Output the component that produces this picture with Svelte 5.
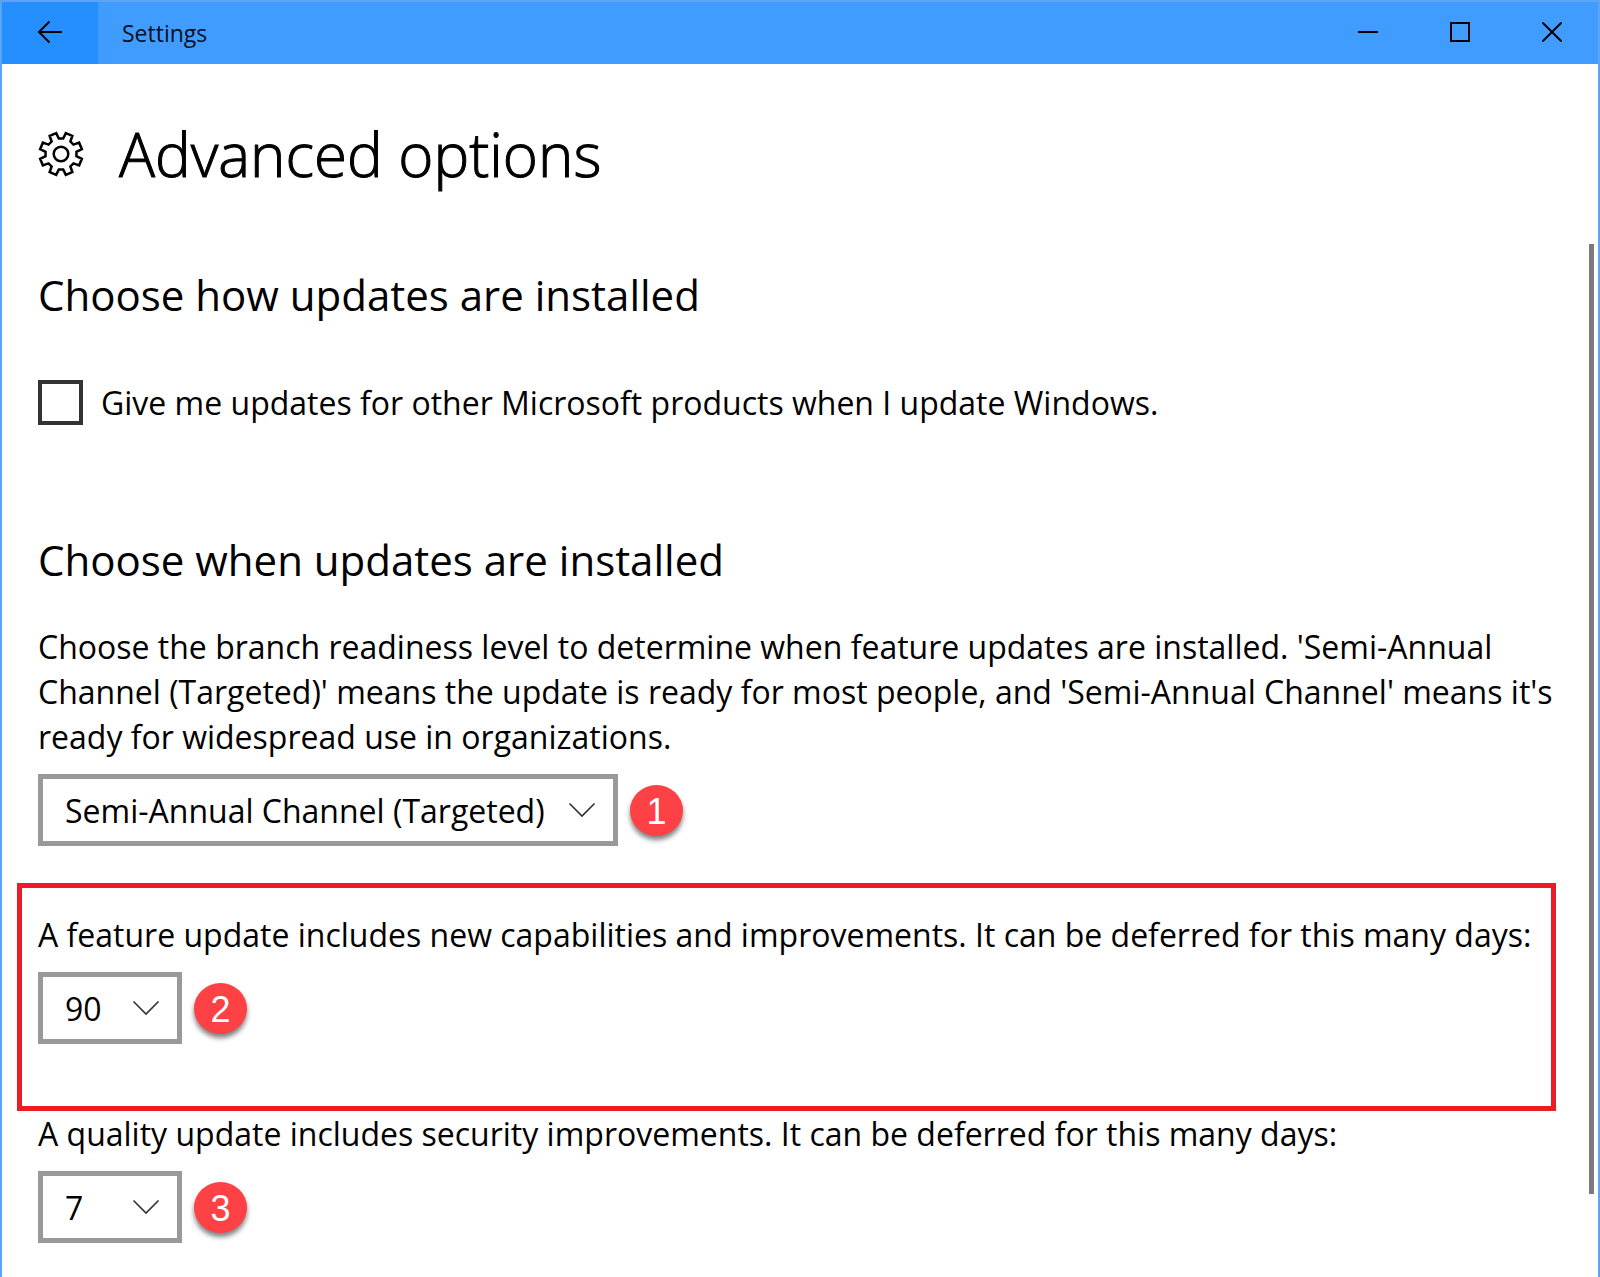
<script lang="ts">
  let otherProducts = $state(false)
  let channel = $state("Semi-Annual Channel (Targeted)")
  let featureDays = $state("90")
  let qualityDays = $state("7")

  const dayOptions = ["0", "7", "14", "30", "60", "90"]

  function gearPath(teeth: number, outer: number, inner: number) {
    const step = 360 / teeth
    const point = (r: number, deg: number) => {
      const a = (deg * Math.PI) / 180
      return `${(24 + r * Math.sin(a)).toFixed(2)} ${(24 - r * Math.cos(a)).toFixed(2)}`
    }
    const points: string[] = []
    for (let i = 0; i < teeth; i++) {
      const base = i * step
      points.push(point(inner, base - 8), point(inner, base + 8), point(outer, base + 13), point(outer, base + step - 13))
    }
    return `M${points.join("L")}Z`
  }
</script>

{#snippet chevron()}
  <svg class="chevron" width="28" height="16" viewBox="0 0 28 16" aria-hidden="true">
    <path d="M1.500 1.500 14 14 26.500 1.500" />
  </svg>
{/snippet}

<div class="window">
  <header class="titlebar">
    <button class="back" type="button" aria-label="Back">
      <svg width="26" height="24" viewBox="0 0 26 24" aria-hidden="true"><path d="M25 12H2M12.5 1.500 2 12l10.500 10.500" /></svg>
    </button>
    <span class="title">Settings</span>
    <button class="control" type="button" aria-label="Minimize">
      <svg width="20" height="20" viewBox="0 0 20 20" aria-hidden="true"><path d="M0 10h20" /></svg>
    </button>
    <button class="control" type="button" aria-label="Maximize">
      <svg width="20" height="20" viewBox="0 0 20 20" aria-hidden="true"><path d="M1 1h18v18H1z" /></svg>
    </button>
    <button class="control" type="button" aria-label="Close">
      <svg width="20" height="20" viewBox="0 0 20 20" aria-hidden="true"><path d="m.5.5 19 19m0-19-19 19" /></svg>
    </button>
  </header>

  <div class="page-head">
    <svg class="gear" width="48" height="48" viewBox="0 0 48 48" aria-hidden="true">
      <path d={gearPath(8, 21.4, 15.6)} />
      <circle cx="24" cy="24" r="7.300" />
    </svg>
    <h1>Advanced options</h1>
  </div>

  <div class="scroll-area">
    <main>
      <section class="how">
        <h2>Choose how updates are installed</h2>
        <label class="check">
          <input type="checkbox" bind:checked={otherProducts} />
          <span>Give me updates for other Microsoft products when I update Windows.</span>
        </label>
      </section>

      <section class="when">
        <h2>Choose when updates are installed</h2>
        <label class="description" for="channel">
          Choose the branch readiness level to determine when feature updates are installed. 'Semi-Annual Channel (Targeted)' means the update is ready for most people, and 'Semi-Annual Channel' means it's ready for widespread use in organizations.
        </label>
        <div class="field">
          <div class="dropdown wide">
            <select id="channel" bind:value={channel}>
              <option>Semi-Annual Channel (Targeted)</option>
              <option>Semi-Annual Channel</option>
            </select>
            {@render chevron()}
          </div>
          <span class="badge">1</span>
        </div>
      </section>

      <section class="highlight">
        <label class="description" for="feature-days">A feature update includes new capabilities and improvements. It can be deferred for this many days:</label>
        <div class="field">
          <div class="dropdown">
            <select id="feature-days" bind:value={featureDays}>
              {#each dayOptions as days}
                <option>{days}</option>
              {/each}
            </select>
            {@render chevron()}
          </div>
          <span class="badge">2</span>
        </div>
      </section>

      <section class="quality">
        <label class="description" for="quality-days">A quality update includes security improvements. It can be deferred for this many days:</label>
        <div class="field">
          <div class="dropdown">
            <select id="quality-days" bind:value={qualityDays}>
              {#each dayOptions as days}
                <option>{days}</option>
              {/each}
            </select>
            {@render chevron()}
          </div>
          <span class="badge">3</span>
        </div>
      </section>
    </main>
    <div class="scrollbar"></div>
  </div>
</div>

<style>
  .window {
    box-sizing: border-box;
    display: flex;
    flex-direction: column;
    min-height: 100vh;
    border: 2px solid #5aa5f5;
    border-bottom: none;
    background: #fff;
    color: #000;
    font-family: "Segoe UI", "Open Sans", "Noto Sans", sans-serif;
    font-size: 32px;
    line-height: 45px;
  }

  .titlebar {
    display: flex;
    align-items: stretch;
    height: 62px;
    background: #409dff;
  }

  .titlebar button {
    display: flex;
    align-items: center;
    justify-content: center;
    padding: 0 0 2px;
    border: none;
    background: none;
  }

  .titlebar .back {
    width: 96px;
    background: #268fff;
  }

  .titlebar .control {
    width: 92px;
  }

  .title {
    flex: 1;
    padding-left: 24px;
    font-size: 23px;
    line-height: 62px;
    color: #03101f;
  }

  svg {
    display: block;
    fill: none;
    stroke: #000;
    stroke-width: 2;
  }

  .page-head {
    display: flex;
    align-items: center;
    gap: 34px;
    height: 180px;
    padding-left: 35px;
  }

  .gear {
    stroke-width: 2.5;
  }

  h1,
  h2 {
    margin: 0;
    font-weight: 400;
  }

  h1 {
    font-size: 60px;
    font-weight: 300;
    line-height: 80px;
    -webkit-text-stroke: 1px #000;
  }

  h2 {
    font-size: 42px;
    line-height: 60px;
  }

  .scroll-area {
    display: flex;
    flex: 1;
    align-items: stretch;
  }

  main {
    flex: 1;
    min-width: 0;
  }

  .scrollbar {
    width: 5px;
    height: 950px;
    margin-right: 4px;
    background: #7a7a7a;
  }

  .how,
  .when,
  .quality {
    padding: 0 36px;
  }

  .how {
    padding-top: 21px;
  }

  .check {
    display: flex;
    align-items: center;
    gap: 18px;
    margin-top: 55px;
  }

  .check input {
    appearance: none;
    flex-shrink: 0;
    width: 45px;
    height: 45px;
    margin: 0;
    border: 4px solid #333;
    background: #fff;
  }

  .check input:checked {
    background: #268fff;
  }

  .when {
    margin-top: 105px;
  }

  .when .description {
    margin-top: 34px;
  }

  .description {
    display: block;
  }

  .field {
    display: flex;
    align-items: center;
    gap: 12px;
    margin-top: 15px;
  }

  .dropdown {
    position: relative;
    width: 144px;
  }

  .dropdown.wide {
    width: 580px;
  }

  select {
    appearance: none;
    display: block;
    box-sizing: border-box;
    width: 100%;
    height: 72px;
    padding: 0 0 0 22px;
    border: 5px solid #999;
    border-radius: 0;
    background: #fff;
    color: #000;
    font: inherit;
  }

  .chevron {
    position: absolute;
    top: 28px;
    right: 22px;
    pointer-events: none;
    stroke: #333;
    stroke-width: 1.6;
  }

  .badge {
    width: 53px;
    height: 51px;
    border-radius: 50%;
    background: #fd4144;
    box-shadow: 0 4px 5px rgba(0, 0, 0, 0.5);
    color: #fff;
    font-family: "Liberation Sans", Arial, sans-serif;
    font-size: 36px;
    line-height: 53px;
    text-align: center;
  }

  .highlight {
    margin: 37px 33px 0 15px;
    padding: 24px 0 62px 16px;
    border: 5px solid #ec1c24;
  }
</style>
